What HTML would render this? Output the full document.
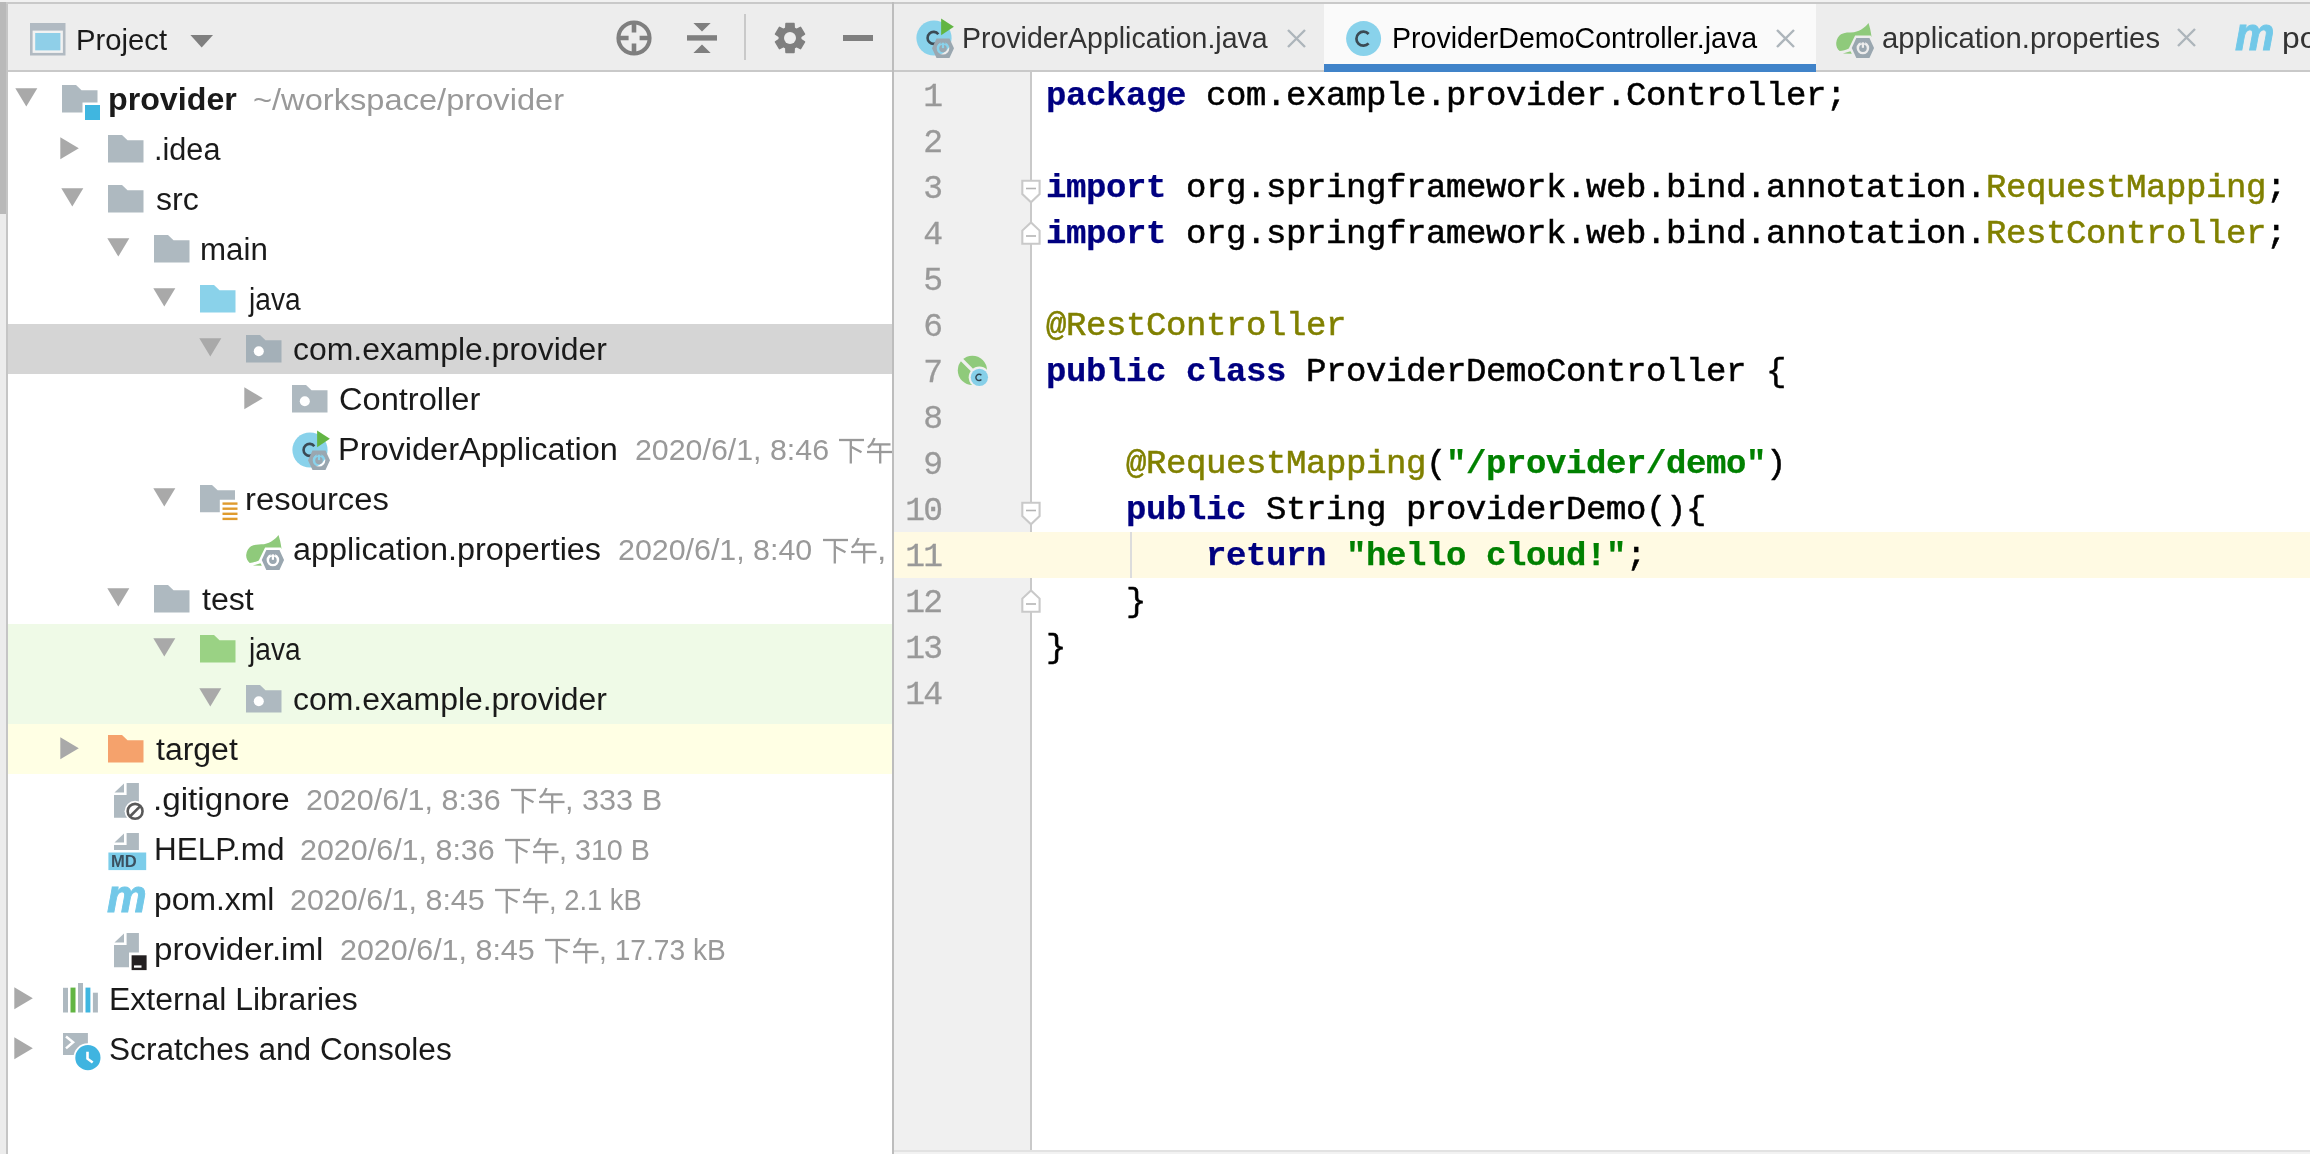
<!DOCTYPE html>
<html><head><meta charset="utf-8"><title>provider</title><style>
html,body{margin:0;padding:0}
body{width:2310px;height:1154px;overflow:hidden;background:#fff;position:relative;font-family:"Liberation Sans",sans-serif}
#r{position:absolute;left:0;top:0;width:2310px;height:1154px;overflow:hidden;will-change:transform}
#r>div,#r>svg,#r>span{position:absolute}
svg{overflow:visible}
.t{white-space:pre;transform-origin:0 0;display:block}
#tree{position:absolute;left:0;top:0;width:892px;height:1154px;overflow:hidden}
#tree>div,#tree>svg,#tree>span{position:absolute}
.cl{left:1046px;height:46px;line-height:46px;font-family:"Liberation Mono",monospace;font-size:34px;white-space:pre;letter-spacing:-0.404px;padding-top:1px;-webkit-text-stroke:0.5px}
.cl b{-webkit-text-stroke:0.25px}
.ln{left:894px;width:47.1px;text-align:right;height:46px;line-height:46px;font-family:"Liberation Mono",monospace;font-size:33px;letter-spacing:-1.9px;color:#999999;white-space:pre;padding-top:2.7px;-webkit-text-stroke:0.3px #999}
</style></head><body><div id="r">
<div style="left:0px;top:0px;width:2310px;height:2px;background:#f1f1f1;"></div>
<div style="left:0px;top:2px;width:2310px;height:2px;background:#c9c9c9;"></div>
<div style="left:0px;top:4px;width:2310px;height:66px;background:#ededed;"></div>
<div style="left:8px;top:70px;width:2302px;height:2px;background:#c9c9c9;"></div>
<div style="left:8px;top:72px;width:884px;height:1082px;background:#ffffff;"></div>
<div style="left:0px;top:2px;width:6px;height:212px;background:#b9b9b9;"></div>
<div style="left:0px;top:214px;width:6px;height:940px;background:#ececec;"></div>
<div style="left:6px;top:4px;width:2px;height:1150px;background:#c5c5c5;"></div>
<div style="left:892px;top:2px;width:2px;height:1152px;background:#bdbdbd;"></div>
<div style="left:894px;top:72px;width:136px;height:1078px;background:#f0f0f0;"></div>
<div style="left:1030px;top:72px;width:2px;height:1078px;background:#c9c9c9;"></div>
<div style="left:1032px;top:72px;width:1278px;height:1078px;background:#ffffff;"></div>
<div style="left:894px;top:1150px;width:1416px;height:2px;background:#e2e2e2;"></div>
<div style="left:894px;top:1152px;width:1416px;height:2px;background:#f2f2f2;"></div>
<div style="left:8px;top:324px;width:884px;height:50px;background:#d5d5d5;"></div>
<div style="left:8px;top:624px;width:884px;height:100px;background:#effae7;"></div>
<div style="left:8px;top:724px;width:884px;height:50px;background:#ffffe4;"></div>
<svg style="left:14.6px;top:88px" width="23" height="19" viewBox="0 0 23 19"><path d="M0.3,0.3 H22.3 L11.3,18.6 Z" fill="#a9a9a9"/></svg>
<svg style="left:62px;top:85px" width="39" height="36" viewBox="0 0 39 36"><path d="M0,0 H14 L19.5,5.2 H35.5 V17.5 H20.5 V27.5 H0 Z" fill="#aeb9c0"/><rect x="23" y="20" width="15" height="15" fill="#40b6e0"/></svg>
<svg style="left:59.5px;top:137px" width="19" height="23" viewBox="0 0 19 23"><path d="M0.3,0.3 L18.8,11.3 L0.3,22.3 Z" fill="#a9a9a9"/></svg>
<svg style="left:108px;top:135px" width="36" height="28" viewBox="0 0 36 28"><path d="M0,0 H14 L19.5,5.2 H35.5 V27.5 H0 Z" fill="#aeb9c0"/></svg>
<svg style="left:60.6px;top:188px" width="23" height="19" viewBox="0 0 23 19"><path d="M0.3,0.3 H22.3 L11.3,18.6 Z" fill="#a9a9a9"/></svg>
<svg style="left:108px;top:185px" width="36" height="28" viewBox="0 0 36 28"><path d="M0,0 H14 L19.5,5.2 H35.5 V27.5 H0 Z" fill="#aeb9c0"/></svg>
<svg style="left:106.6px;top:238px" width="23" height="19" viewBox="0 0 23 19"><path d="M0.3,0.3 H22.3 L11.3,18.6 Z" fill="#a9a9a9"/></svg>
<svg style="left:154px;top:235px" width="36" height="28" viewBox="0 0 36 28"><path d="M0,0 H14 L19.5,5.2 H35.5 V27.5 H0 Z" fill="#aeb9c0"/></svg>
<svg style="left:152.6px;top:288px" width="23" height="19" viewBox="0 0 23 19"><path d="M0.3,0.3 H22.3 L11.3,18.6 Z" fill="#a9a9a9"/></svg>
<svg style="left:200px;top:285px" width="36" height="28" viewBox="0 0 36 28"><path d="M0,0 H14 L19.5,5.2 H35.5 V27.5 H0 Z" fill="#8ad2ea"/></svg>
<svg style="left:198.6px;top:338px" width="23" height="19" viewBox="0 0 23 19"><path d="M0.3,0.3 H22.3 L11.3,18.6 Z" fill="#a9a9a9"/></svg>
<svg style="left:246px;top:335px" width="36" height="28" viewBox="0 0 36 28"><path d="M0,0 H14 L19.5,5.2 H35.5 V27.5 H0 Z" fill="#a4b0b8"/><circle cx="12.8" cy="16.2" r="5" fill="#fff"/></svg>
<svg style="left:243.5px;top:387px" width="19" height="23" viewBox="0 0 19 23"><path d="M0.3,0.3 L18.8,11.3 L0.3,22.3 Z" fill="#a9a9a9"/></svg>
<svg style="left:292px;top:385px" width="36" height="28" viewBox="0 0 36 28"><path d="M0,0 H14 L19.5,5.2 H35.5 V27.5 H0 Z" fill="#aeb9c0"/><circle cx="12.8" cy="16.2" r="5" fill="#fff"/></svg>
<svg style="left:292px;top:429.7px" width="40" height="42" viewBox="0 0 40 42"><circle cx="18" cy="20" r="17.6" fill="#89d2eb"/><path d="M22.3,16.2 A6,6 0 1 0 22.3,23.6" fill="none" stroke="#3b4a54" stroke-width="2.6"/><path d="M25.1,0.4 L37.9,8.8 L25.1,17.3 Z" fill="#62b543"/><path d="M16.00,30.30 L20.51,20.50 L33.49,20.50 L38.00,30.30 L33.49,40.10 L20.51,40.10 Z M20.70,30.30 a6.3,6.3 0 1 0 12.6,0 a6.3,6.3 0 1 0 -12.6,0 Z" fill="#9aa7b0" fill-rule="evenodd"/><circle cx="27" cy="30.5" r="3.75" fill="#9aa7b0"/><path d="M24.7,25.1 L27,22.9 L29.3,25.1 Z" fill="#9aa7b0" stroke="#9aa7b0" stroke-width="1"/><rect x="25.90" y="24.70" width="2.2" height="5.4" fill="#89d2eb"/></svg>
<svg style="left:152.6px;top:488px" width="23" height="19" viewBox="0 0 23 19"><path d="M0.3,0.3 H22.3 L11.3,18.6 Z" fill="#a9a9a9"/></svg>
<svg style="left:200px;top:485px" width="38" height="36" viewBox="0 0 38 36"><path d="M0,0 H12 L17.6,5.2 H35 V14.7 H19.8 V27.2 H0 Z" fill="#aeb9c0"/><rect x="22.5" y="17.4" width="15" height="2.4" fill="#df9b2e"/><rect x="22.5" y="22.5" width="15" height="2.4" fill="#df9b2e"/><rect x="22.5" y="27.6" width="15" height="2.4" fill="#df9b2e"/><rect x="22.5" y="32.7" width="15" height="2.4" fill="#df9b2e"/></svg>
<svg style="left:246px;top:535px" width="39" height="36" viewBox="0 0 39 36"><path d="M32.5,0 C33.8,4 35,9 35.5,13.9 L34.6,12.6 H19.1 L12.8,25.5 C10,26.8 6.5,27.8 3.7,27.9 C1.2,26 0,23 0.2,19.9 C0.5,16 2.5,13 5,11.2 C8.5,9.3 13,9.4 18,9.2 C21.5,8.6 24.5,7.2 26.7,5.6 C29,4 31,2 32.5,0 Z" fill="#8fca7b"/><path d="M6.9,30.5 L14.5,28.3 L15.8,30.7 Z" fill="#8fca7b"/><path d="M15.75,25.00 L20.32,15.10 L33.48,15.10 L38.05,25.00 L33.48,34.90 L20.32,34.90 Z M20.60,25.00 a6.3,6.3 0 1 0 12.6,0 a6.3,6.3 0 1 0 -12.6,0 Z" fill="#9aa7b0" fill-rule="evenodd"/><circle cx="26.9" cy="25.2" r="3.75" fill="#9aa7b0"/><path d="M24.599999999999998,19.8 L26.9,17.6 L29.2,19.8 Z" fill="#9aa7b0" stroke="#9aa7b0" stroke-width="1"/><rect x="25.80" y="19.40" width="2.2" height="5.4" fill="#fff"/></svg>
<svg style="left:106.6px;top:588px" width="23" height="19" viewBox="0 0 23 19"><path d="M0.3,0.3 H22.3 L11.3,18.6 Z" fill="#a9a9a9"/></svg>
<svg style="left:154px;top:585px" width="36" height="28" viewBox="0 0 36 28"><path d="M0,0 H14 L19.5,5.2 H35.5 V27.5 H0 Z" fill="#aeb9c0"/></svg>
<svg style="left:152.6px;top:638px" width="23" height="19" viewBox="0 0 23 19"><path d="M0.3,0.3 H22.3 L11.3,18.6 Z" fill="#a9a9a9"/></svg>
<svg style="left:200px;top:635px" width="36" height="28" viewBox="0 0 36 28"><path d="M0,0 H14 L19.5,5.2 H35.5 V27.5 H0 Z" fill="#9ad284"/></svg>
<svg style="left:198.6px;top:688px" width="23" height="19" viewBox="0 0 23 19"><path d="M0.3,0.3 H22.3 L11.3,18.6 Z" fill="#a9a9a9"/></svg>
<svg style="left:246px;top:685px" width="36" height="28" viewBox="0 0 36 28"><path d="M0,0 H14 L19.5,5.2 H35.5 V27.5 H0 Z" fill="#aeb9c0"/><circle cx="12.8" cy="16.2" r="5" fill="#fff"/></svg>
<svg style="left:59.5px;top:737px" width="19" height="23" viewBox="0 0 19 23"><path d="M0.3,0.3 L18.8,11.3 L0.3,22.3 Z" fill="#a9a9a9"/></svg>
<svg style="left:108px;top:735px" width="36" height="28" viewBox="0 0 36 28"><path d="M0,0 H14 L19.5,5.2 H35.5 V27.5 H0 Z" fill="#f5a26c"/></svg>
<svg style="left:113.8px;top:782.5px" width="33" height="40" viewBox="0 0 33 40"><path d="M0.5,9.5 L10,0.4 V9.5 Z" fill="#aeb9c0"/><path d="M12.6,0 H24.9 V34.7 H0 V12.1 H12.6 Z" fill="#aeb9c0"/><circle cx="21.1" cy="28.3" r="10.5" fill="#fff"/><circle cx="21.1" cy="28.3" r="7.45" fill="none" stroke="#595959" stroke-width="2.6"/><path d="M15.9,33.5 L26.3,23.1" stroke="#595959" stroke-width="2.6"/></svg>
<svg style="left:113.8px;top:832.8px" width="33" height="38" viewBox="0 0 33 38"><path d="M0.5,9.5 L10,0.4 V9.5 Z" fill="#aeb9c0"/><path d="M12.6,0 H24.9 V16.9 H0 V12.1 H12.6 Z" fill="#aeb9c0"/><rect x="-5.6" y="19.5" width="37.8" height="17.6" fill="#7ccdea"/></svg>
<svg style="left:113.8px;top:932.8px" width="34" height="38" viewBox="0 0 34 38"><path d="M0.5,9.5 L10,0.4 V9.5 Z" fill="#aeb9c0"/><path d="M12.6,0 H24.9 V19.5 H15 V34.3 H0 V12.1 H12.6 Z" fill="#aeb9c0"/><rect x="17.6" y="22.3" width="15" height="14.8" fill="#231f20"/><rect x="20" y="32.4" width="7.5" height="2.3" fill="#fff"/></svg>
<svg style="left:13.5px;top:987px" width="19" height="23" viewBox="0 0 19 23"><path d="M0.3,0.3 L18.8,11.3 L0.3,22.3 Z" fill="#a9a9a9"/></svg>
<svg style="left:62.6px;top:982.8px" width="36" height="30" viewBox="0 0 36 30"><rect x="0" y="4.8" width="5" height="24.7" fill="#aeb9c0"/><rect x="7.5" y="4.6" width="5" height="24.9" fill="#62b543"/><rect x="15" y="0" width="5" height="29.5" fill="#aeb9c0"/><rect x="22.5" y="4.6" width="4.9" height="24.9" fill="#40b6e0"/><rect x="29.9" y="9.7" width="5" height="19.8" fill="#aeb9c0"/></svg>
<svg style="left:13.5px;top:1037px" width="19" height="23" viewBox="0 0 19 23"><path d="M0.3,0.3 L18.8,11.3 L0.3,22.3 Z" fill="#a9a9a9"/></svg>
<svg style="left:62.6px;top:1032.8px" width="39" height="38" viewBox="0 0 39 38"><rect x="0" y="0" width="24.9" height="22" fill="#aeb9c0"/><path d="M3,3.5 L10.1,9.3 L3,15.4" fill="none" stroke="#fff" stroke-width="2.5"/><circle cx="24.9" cy="24.7" r="14.4" fill="#fff"/><circle cx="24.9" cy="24.7" r="12.6" fill="#40b4e0"/><path d="M24.5,18.7 V25.7 L29.7,29.5" fill="none" stroke="#fff" stroke-width="2.6"/></svg>
<svg style="left:839px;top:438px" width="26" height="26" viewBox="0 0 26 26"><g fill="none" stroke="#999999" stroke-width="2.3"><path d="M0,2 H25"/><path d="M11.8,2 V25.5"/><path d="M12.6,9 L22.5,14.2"/></g></svg>
<svg style="left:867px;top:438px" width="26" height="26" viewBox="0 0 26 26"><g fill="none" stroke="#999999" stroke-width="2.3"><path d="M7.5,0 C6.4,3.6 4,7.2 1,9.6"/><path d="M5.3,6.4 H23.5"/><path d="M0,14 H25.5"/><path d="M13.2,6.4 V25.5"/></g></svg>
<svg style="left:823px;top:538px" width="26" height="26" viewBox="0 0 26 26"><g fill="none" stroke="#999999" stroke-width="2.3"><path d="M0,2 H25"/><path d="M11.8,2 V25.5"/><path d="M12.6,9 L22.5,14.2"/></g></svg>
<svg style="left:851px;top:538px" width="26" height="26" viewBox="0 0 26 26"><g fill="none" stroke="#999999" stroke-width="2.3"><path d="M7.5,0 C6.4,3.6 4,7.2 1,9.6"/><path d="M5.3,6.4 H23.5"/><path d="M0,14 H25.5"/><path d="M13.2,6.4 V25.5"/></g></svg>
<svg style="left:511px;top:788px" width="26" height="26" viewBox="0 0 26 26"><g fill="none" stroke="#999999" stroke-width="2.3"><path d="M0,2 H25"/><path d="M11.8,2 V25.5"/><path d="M12.6,9 L22.5,14.2"/></g></svg>
<svg style="left:539px;top:788px" width="26" height="26" viewBox="0 0 26 26"><g fill="none" stroke="#999999" stroke-width="2.3"><path d="M7.5,0 C6.4,3.6 4,7.2 1,9.6"/><path d="M5.3,6.4 H23.5"/><path d="M0,14 H25.5"/><path d="M13.2,6.4 V25.5"/></g></svg>
<svg style="left:505px;top:838px" width="26" height="26" viewBox="0 0 26 26"><g fill="none" stroke="#999999" stroke-width="2.3"><path d="M0,2 H25"/><path d="M11.8,2 V25.5"/><path d="M12.6,9 L22.5,14.2"/></g></svg>
<svg style="left:533px;top:838px" width="26" height="26" viewBox="0 0 26 26"><g fill="none" stroke="#999999" stroke-width="2.3"><path d="M7.5,0 C6.4,3.6 4,7.2 1,9.6"/><path d="M5.3,6.4 H23.5"/><path d="M0,14 H25.5"/><path d="M13.2,6.4 V25.5"/></g></svg>
<svg style="left:495px;top:888px" width="26" height="26" viewBox="0 0 26 26"><g fill="none" stroke="#999999" stroke-width="2.3"><path d="M0,2 H25"/><path d="M11.8,2 V25.5"/><path d="M12.6,9 L22.5,14.2"/></g></svg>
<svg style="left:523px;top:888px" width="26" height="26" viewBox="0 0 26 26"><g fill="none" stroke="#999999" stroke-width="2.3"><path d="M7.5,0 C6.4,3.6 4,7.2 1,9.6"/><path d="M5.3,6.4 H23.5"/><path d="M0,14 H25.5"/><path d="M13.2,6.4 V25.5"/></g></svg>
<svg style="left:545px;top:938px" width="26" height="26" viewBox="0 0 26 26"><g fill="none" stroke="#999999" stroke-width="2.3"><path d="M0,2 H25"/><path d="M11.8,2 V25.5"/><path d="M12.6,9 L22.5,14.2"/></g></svg>
<svg style="left:573px;top:938px" width="26" height="26" viewBox="0 0 26 26"><g fill="none" stroke="#999999" stroke-width="2.3"><path d="M7.5,0 C6.4,3.6 4,7.2 1,9.6"/><path d="M5.3,6.4 H23.5"/><path d="M0,14 H25.5"/><path d="M13.2,6.4 V25.5"/></g></svg>
<div style="left:892px;top:72px;width:2px;height:1082px;background:#bdbdbd;"></div>
<svg style="left:30px;top:23px" width="36" height="33" viewBox="0 0 36 33"><rect x="0" y="0" width="35.5" height="32.5" fill="#b1bac2"/><rect x="2.6" y="7.6" width="30.3" height="22.3" fill="#f2f2f2"/><rect x="5.2" y="10" width="25.2" height="17.4" fill="#8fcfe8"/></svg>
<svg style="left:190px;top:35px" width="24" height="13" viewBox="0 0 24 13"><path d="M0.4,0 H23 L11.7,12.6 Z" fill="#7f7f7f"/></svg>
<svg style="left:615px;top:19px" width="38" height="38" viewBox="0 0 38 38"><circle cx="19" cy="19" r="15.6" fill="none" stroke="#7f7f7f" stroke-width="4"/><path d="M19,4 V13.6 M19,24.6 V34 M4,19 H13.6 M24.6,19 H34" stroke="#7f7f7f" stroke-width="4.6"/></svg>
<svg style="left:686px;top:22px" width="32" height="32" viewBox="0 0 32 32"><rect x="1" y="13.2" width="30" height="5.4" fill="#7f7f7f"/><path d="M7.4,1 H24.7 L16,9.6 Z M7.4,31 H24.7 L16,22.6 Z" fill="#7f7f7f"/></svg>
<div style="left:744px;top:14px;width:2px;height:46px;background:#c9c9c9;"></div>
<svg style="left:772px;top:20px" width="36" height="36" viewBox="0 0 36 36"><path d="M13.79,8.05 L14.00,3.54 L22.00,3.54 L22.21,8.05 L24.51,9.38 L28.52,7.31 L32.52,14.24 L28.72,16.67 L28.72,19.33 L32.52,21.76 L28.52,28.69 L24.51,26.62 L22.21,27.95 L22.00,32.46 L14.00,32.46 L13.79,27.95 L11.49,26.62 L7.48,28.69 L3.48,21.76 L7.28,19.33 L7.28,16.67 L3.48,14.24 L7.48,7.31 L11.49,9.38 Z" fill="#7f7f7f" stroke="#7f7f7f" stroke-width="1.5" stroke-linejoin="round"/><circle cx="18" cy="18" r="6" fill="#ededed"/></svg>
<div style="left:843px;top:35px;width:30px;height:5.5px;background:#7f7f7f;"></div>
<div style="left:1324px;top:4px;width:492px;height:60px;background:#fafafa;"></div>
<div style="left:1324px;top:64px;width:492px;height:8px;background:#4083c9;"></div>
<svg style="left:916px;top:17.5px" width="40" height="42" viewBox="0 0 40 42"><circle cx="18" cy="20" r="17.6" fill="#89d2eb"/><path d="M22.3,16.2 A6,6 0 1 0 22.3,23.6" fill="none" stroke="#3b4a54" stroke-width="2.6"/><path d="M25.1,0.4 L37.9,8.8 L25.1,17.3 Z" fill="#62b543"/><path d="M16.00,30.30 L20.51,20.50 L33.49,20.50 L38.00,30.30 L33.49,40.10 L20.51,40.10 Z M20.70,30.30 a6.3,6.3 0 1 0 12.6,0 a6.3,6.3 0 1 0 -12.6,0 Z" fill="#9aa7b0" fill-rule="evenodd"/><circle cx="27" cy="30.5" r="3.75" fill="#9aa7b0"/><path d="M24.7,25.1 L27,22.9 L29.3,25.1 Z" fill="#9aa7b0" stroke="#9aa7b0" stroke-width="1"/><rect x="25.90" y="24.70" width="2.2" height="5.4" fill="#89d2eb"/></svg>
<svg style="left:1286.5px;top:28.5px" width="19" height="19" viewBox="0 0 19 19"><path d="M1,1 L18,18 M18,1 L1,18" stroke="#adb5bb" stroke-width="2.4" fill="none"/></svg>
<svg style="left:1346.3px;top:20.5px" width="36" height="36" viewBox="0 0 36 36"><circle cx="17.6" cy="17.6" r="17.5" fill="#89d2eb"/><path d="M22.6,13 A7,7 0 1 0 22.6,22.4" fill="none" stroke="#3b4a54" stroke-width="2.7"/></svg>
<svg style="left:1776px;top:28.5px" width="19" height="19" viewBox="0 0 19 19"><path d="M1,1 L18,18 M18,1 L1,18" stroke="#adb5bb" stroke-width="2.4" fill="none"/></svg>
<svg style="left:1836px;top:22.5px" width="39" height="36" viewBox="0 0 39 36"><path d="M32.5,0 C33.8,4 35,9 35.5,13.9 L34.6,12.6 H19.1 L12.8,25.5 C10,26.8 6.5,27.8 3.7,27.9 C1.2,26 0,23 0.2,19.9 C0.5,16 2.5,13 5,11.2 C8.5,9.3 13,9.4 18,9.2 C21.5,8.6 24.5,7.2 26.7,5.6 C29,4 31,2 32.5,0 Z" fill="#8fca7b"/><path d="M6.9,30.5 L14.5,28.3 L15.8,30.7 Z" fill="#8fca7b"/><path d="M15.75,25.00 L20.32,15.10 L33.48,15.10 L38.05,25.00 L33.48,34.90 L20.32,34.90 Z M20.60,25.00 a6.3,6.3 0 1 0 12.6,0 a6.3,6.3 0 1 0 -12.6,0 Z" fill="#9aa7b0" fill-rule="evenodd"/><circle cx="26.9" cy="25.2" r="3.75" fill="#9aa7b0"/><path d="M24.599999999999998,19.8 L26.9,17.6 L29.2,19.8 Z" fill="#9aa7b0" stroke="#9aa7b0" stroke-width="1"/><rect x="25.80" y="19.40" width="2.2" height="5.4" fill="#ededed"/></svg>
<svg style="left:2177px;top:28.4px" width="19" height="19" viewBox="0 0 19 19"><path d="M1,1 L18,18 M18,1 L1,18" stroke="#adb5bb" stroke-width="2.4" fill="none"/></svg>
<div style="left:894px;top:532px;width:1416px;height:46px;background:#fffae3;"></div>
<div style="left:1130px;top:532px;width:2px;height:46px;background:#dcdcdc;"></div>
<div style="left:1030px;top:202px;width:2px;height:20px;background:#c9c9c9;"></div>
<svg style="left:1020px;top:178.5px" width="22" height="26" viewBox="0 0 22 26"><path d="M2.3,1.8 H19.6 V15 L11,23.2 L2.3,15 Z" fill="#fff" stroke="#c9c9c9" stroke-width="2.1"/><path d="M6,9.5 H16" stroke="#b4b4b4" stroke-width="1.6"/></svg>
<svg style="left:1020px;top:220px" width="22" height="26" viewBox="0 0 22 26"><path d="M2.3,23.8 H19.6 V10.6 L11,2.4 L2.3,10.6 Z" fill="#fff" stroke="#c9c9c9" stroke-width="2.1"/><path d="M6,16 H16" stroke="#b4b4b4" stroke-width="1.6"/></svg>
<svg style="left:1020px;top:500.6px" width="22" height="26" viewBox="0 0 22 26"><path d="M2.3,1.8 H19.6 V15 L11,23.2 L2.3,15 Z" fill="#fff" stroke="#c9c9c9" stroke-width="2.1"/><path d="M6,9.5 H16" stroke="#b4b4b4" stroke-width="1.6"/></svg>
<svg style="left:1020px;top:587.5px" width="22" height="26" viewBox="0 0 22 26"><path d="M2.3,23.8 H19.6 V10.6 L11,2.4 L2.3,10.6 Z" fill="#fff" stroke="#c9c9c9" stroke-width="2.1"/><path d="M6,16 H16" stroke="#b4b4b4" stroke-width="1.6"/></svg>
<svg style="left:956px;top:354px" width="36" height="36" viewBox="0 0 36 36"><circle cx="16.4" cy="16.4" r="14.6" fill="#8fca7b"/><path d="M2,2 L16.6,16.6" stroke="#f0f0f0" stroke-width="3.3" fill="none"/><circle cx="23.4" cy="23.3" r="10.7" fill="#f0f0f0"/><circle cx="23.4" cy="23.3" r="8.65" fill="#86cfe8"/><path d="M25.4,21.3 A3.15,3.15 0 1 0 25.4,25.5" stroke="#2f4450" stroke-width="1.4" fill="none"/></svg>
<span class="t" style="left:107.52px;top:80.76px;font-size:31px;line-height:37px;color:#1a1a1a;transform:scaleX(1.0388);font-weight:700">provider</span>
<span class="t" style="left:153.62px;top:130.76px;font-size:31px;line-height:37px;color:#1a1a1a;transform:scaleX(0.9882)">.idea</span>
<span class="t" style="left:155.60px;top:180.76px;font-size:31px;line-height:37px;color:#1a1a1a;transform:scaleX(1.0337)">src</span>
<span class="t" style="left:199.58px;top:230.76px;font-size:31px;line-height:37px;color:#1a1a1a;transform:scaleX(1.0086)">main</span>
<span class="t" style="left:248.51px;top:280.76px;font-size:31px;line-height:37px;color:#1a1a1a;transform:scaleX(0.9074)">java</span>
<span class="t" style="left:292.57px;top:330.76px;font-size:31px;line-height:37px;color:#1a1a1a;transform:scaleX(1.0292)">com.example.provider</span>
<span class="t" style="left:339.15px;top:380.76px;font-size:31px;line-height:37px;color:#1a1a1a;transform:scaleX(1.0514)">Controller</span>
<span class="t" style="left:337.50px;top:430.76px;font-size:31px;line-height:37px;color:#1a1a1a;transform:scaleX(1.0480)">ProviderApplication</span>
<span class="t" style="left:245.49px;top:480.76px;font-size:31px;line-height:37px;color:#1a1a1a;transform:scaleX(1.0568)">resources</span>
<span class="t" style="left:292.55px;top:530.76px;font-size:31px;line-height:37px;color:#1a1a1a;transform:scaleX(1.0454)">application.properties</span>
<span class="t" style="left:201.60px;top:580.76px;font-size:31px;line-height:37px;color:#1a1a1a;transform:scaleX(1.0367)">test</span>
<span class="t" style="left:248.51px;top:630.76px;font-size:31px;line-height:37px;color:#1a1a1a;transform:scaleX(0.9074)">java</span>
<span class="t" style="left:292.57px;top:680.76px;font-size:31px;line-height:37px;color:#1a1a1a;transform:scaleX(1.0292)">com.example.provider</span>
<span class="t" style="left:155.60px;top:730.76px;font-size:31px;line-height:37px;color:#1a1a1a;transform:scaleX(1.0319)">target</span>
<span class="t" style="left:153.46px;top:780.76px;font-size:31px;line-height:37px;color:#1a1a1a;transform:scaleX(1.0717)">.gitignore</span>
<span class="t" style="left:153.57px;top:830.76px;font-size:31px;line-height:37px;color:#1a1a1a;transform:scaleX(1.0142)">HELP.md</span>
<span class="t" style="left:107.00px;top:869.16px;font-size:46px;line-height:55px;color:#72c8e8;transform:scaleX(0.9692);font-weight:700;font-style:italic;-webkit-text-stroke:0.9px #72c8e8">m</span>
<span class="t" style="left:154.45px;top:880.76px;font-size:31px;line-height:37px;color:#1a1a1a;transform:scaleX(1.0270)">pom.xml</span>
<span class="t" style="left:154.36px;top:930.76px;font-size:31px;line-height:37px;color:#1a1a1a;transform:scaleX(1.0691)">provider.iml</span>
<span class="t" style="left:108.54px;top:980.76px;font-size:31px;line-height:37px;color:#1a1a1a;transform:scaleX(1.0313)">External Libraries</span>
<span class="t" style="left:108.58px;top:1030.76px;font-size:31px;line-height:37px;color:#1a1a1a;transform:scaleX(1.0200)">Scratches and Consoles</span>
<span class="t" style="left:252.91px;top:81.60px;font-size:30px;line-height:36px;color:#999999;transform:scaleX(1.0878)">~/workspace/provider</span>
<span class="t" style="left:634.69px;top:431.61px;font-size:30px;line-height:36px;color:#999999;transform:scaleX(1.0113)">2020/6/1, 8:46</span>
<span class="t" style="left:618.49px;top:531.61px;font-size:30px;line-height:36px;color:#999999;transform:scaleX(1.0124)">2020/6/1, 8:40</span>
<span class="t" style="left:877.25px;top:531.61px;font-size:30px;line-height:36px;color:#999999;transform:scaleX(1.1250)">,</span>
<span class="t" style="left:305.99px;top:781.61px;font-size:30px;line-height:36px;color:#999999;transform:scaleX(1.0150)">2020/6/1, 8:36</span>
<span class="t" style="left:564.96px;top:781.61px;font-size:30px;line-height:36px;color:#999999;transform:scaleX(1.0211)">, 333 B</span>
<span class="t" style="left:299.99px;top:831.61px;font-size:30px;line-height:36px;color:#999999;transform:scaleX(1.0150)">2020/6/1, 8:36</span>
<span class="t" style="left:559.09px;top:831.61px;font-size:30px;line-height:36px;color:#999999;transform:scaleX(0.9559)">, 310 B</span>
<span class="t" style="left:289.99px;top:881.61px;font-size:30px;line-height:36px;color:#999999;transform:scaleX(1.0150)">2020/6/1, 8:45</span>
<span class="t" style="left:549.18px;top:881.61px;font-size:30px;line-height:36px;color:#999999;transform:scaleX(0.9118)">, 2.1 kB</span>
<span class="t" style="left:339.99px;top:931.61px;font-size:30px;line-height:36px;color:#999999;transform:scaleX(1.0150)">2020/6/1, 8:45</span>
<span class="t" style="left:599.12px;top:931.61px;font-size:30px;line-height:36px;color:#999999;transform:scaleX(0.9388)">, 17.73 kB</span>
<span class="t" style="left:110.53px;top:852.31px;font-size:17px;line-height:20px;color:#3b5160;transform:scaleX(0.9737);font-weight:700">MD</span>
<span class="t" style="left:76.28px;top:23.05px;font-size:29px;line-height:35px;color:#1a1a1a;transform:scaleX(1.0091)">Project</span>
<span class="t" style="left:961.54px;top:21.45px;font-size:29px;line-height:35px;color:#333333;transform:scaleX(0.9823)">ProviderApplication.java</span>
<span class="t" style="left:1391.53px;top:21.45px;font-size:29px;line-height:35px;color:#000000;transform:scaleX(0.9849)">ProviderDemoController.java</span>
<span class="t" style="left:1881.99px;top:21.45px;font-size:29px;line-height:35px;color:#333333;transform:scaleX(1.0085)">application.properties</span>
<span class="t" style="left:2234.80px;top:6.96px;font-size:46px;line-height:55px;color:#72c8e8;transform:scaleX(0.9641);font-weight:700;font-style:italic;-webkit-text-stroke:0.9px #72c8e8">m</span>
<span class="t" style="left:2282.40px;top:21.45px;font-size:29px;line-height:35px;color:#333333;transform:scaleX(1.0968)">pom.xml</span>
<div class="ln" style="top:72px">1</div>
<div class="ln" style="top:118px">2</div>
<div class="ln" style="top:164px">3</div>
<div class="ln" style="top:210px">4</div>
<div class="ln" style="top:256px">5</div>
<div class="ln" style="top:302px">6</div>
<div class="ln" style="top:348px">7</div>
<div class="ln" style="top:394px">8</div>
<div class="ln" style="top:440px">9</div>
<div class="ln" style="top:486px">10</div>
<div class="ln" style="top:532px">11</div>
<div class="ln" style="top:578px">12</div>
<div class="ln" style="top:624px">13</div>
<div class="ln" style="top:670px">14</div>
<div class="cl" style="top:72px"><b style="color:#000080">package</b><span style="color:#000000"> com.example.provider.Controller;</span></div>
<div class="cl" style="top:164px"><b style="color:#000080">import</b><span style="color:#000000"> org.springframework.web.bind.annotation.</span><span style="color:#808000">RequestMapping</span><span style="color:#000000">;</span></div>
<div class="cl" style="top:210px"><b style="color:#000080">import</b><span style="color:#000000"> org.springframework.web.bind.annotation.</span><span style="color:#808000">RestController</span><span style="color:#000000">;</span></div>
<div class="cl" style="top:302px"><span style="color:#808000">@RestController</span></div>
<div class="cl" style="top:348px"><b style="color:#000080">public class</b><span style="color:#000000"> ProviderDemoController {</span></div>
<div class="cl" style="top:440px"><span style="color:#000000">    </span><span style="color:#808000">@RequestMapping</span><span style="color:#000000">(</span><b style="color:#008000">&quot;/provider/demo&quot;</b><span style="color:#000000">)</span></div>
<div class="cl" style="top:486px"><span style="color:#000000">    </span><b style="color:#000080">public</b><span style="color:#000000"> String providerDemo(){</span></div>
<div class="cl" style="top:532px"><span style="color:#000000">        </span><b style="color:#000080">return</b><span style="color:#000000"> </span><b style="color:#008000">&quot;hello cloud!&quot;</b><span style="color:#000000">;</span></div>
<div class="cl" style="top:578px"><span style="color:#000000">    }</span></div>
<div class="cl" style="top:624px"><span style="color:#000000">}</span></div>
</div></body></html>
